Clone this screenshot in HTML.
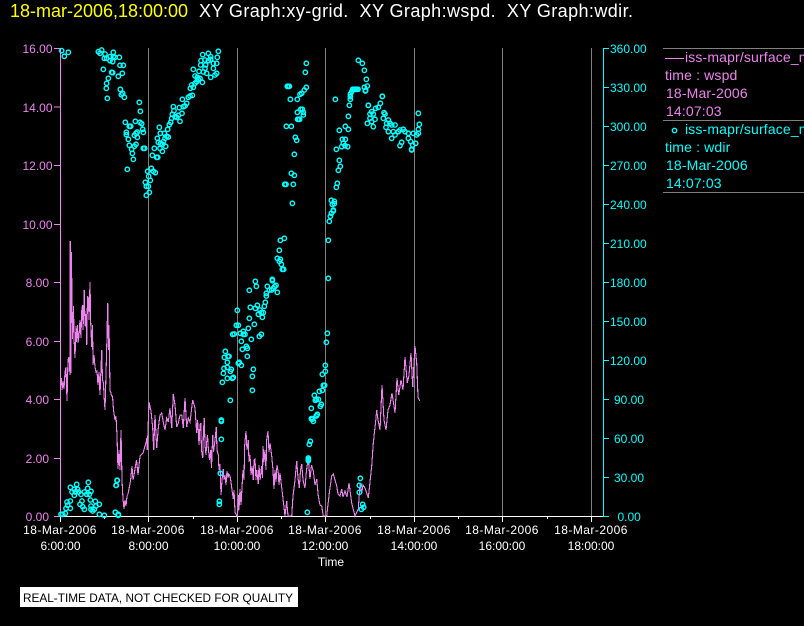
<!DOCTYPE html>
<html>
<head>
<meta charset="utf-8">
<style>
html,body{margin:0;padding:0;background:#000;width:804px;height:626px;overflow:hidden}
svg{display:block;position:absolute;left:0;top:0}
text{font-family:"Liberation Sans",sans-serif;white-space:pre}
.l text{font-size:12px;fill:#EE82EE}
.r text{font-size:12px;fill:#00FFFF}
.b text{font-size:12px;fill:#fff;text-anchor:middle}
.b .dt{letter-spacing:.45px}
.lg text{font-size:14px;letter-spacing:.15px}
.d polyline{fill:none;stroke:none;marker-start:url(#m);marker-mid:url(#m);marker-end:url(#m)}
</style>
</head>
<body>
<svg width="804" height="626" viewBox="0 0 804 626" xmlns="http://www.w3.org/2000/svg">
<defs>
<marker id="m" markerUnits="userSpaceOnUse" markerWidth="30" markerHeight="30" refX="15" refY="15" viewBox="0 0 30 30" overflow="visible">
<circle cx="15" cy="15" r="6.6" fill="none" stroke="#00FFFF" stroke-width="4.2"/>
</marker>
</defs>
<rect width="804" height="626" fill="#000"/>

<text x="10" y="17" font-size="18" fill="#FFFF00" textLength="178" lengthAdjust="spacingAndGlyphs">18-mar-2006,18:00:00</text>
<text x="199" y="17" font-size="18" fill="#fff" textLength="434" lengthAdjust="spacing">XY Graph:xy-grid.  XY Graph:wspd.  XY Graph:wdir.</text>

<g shape-rendering="crispEdges" stroke-width="1" fill="none">
<path stroke="#808080" d="M148.5 48V516M237.5 48V516M325.5 48V516M414.5 48V516M502.5 48V516M591.5 48V516"/>
<path stroke="#808080" d="M663 48.5H804M663 120.5H804M663 192.5H804"/>
<path stroke="#EE82EE" d="M60.5 48V516.5M54 48.5H60M54 107H60M54 165.5H60M54 224.5H60M54 282.5H60M54 341.5H60M54 399.5H60M54 458.5H60M54 516.5H60M665 58.5H684"/>
<path stroke="#00FFFF" d="M603.5 48.5V516.5M603 48.5H609M603 87.5H609M603 126.5H609M603 165.5H609M603 204.5H609M603 243.5H609M603 282.5H609M603 321.5H609M603 360.5H609M603 399.5H609M603 438.5H609M603 477.5H609M603 516.5H609"/>
<path stroke="#fff" d="M60 516.5H603M60.5 516V522M148.5 516V522M237.5 516V522M325.5 516V522M414.5 516V522M502.5 516V522M591.5 516V522M104.5 516V519M193.5 516V519M281.5 516V519M370.5 516V519M458.5 516V519M547.5 516V519"/>
</g>

<g class="l" text-anchor="end">
<text x="52.5" y="53">16.00</text><text x="52.5" y="112">14.00</text><text x="52.5" y="170">12.00</text><text x="52.5" y="229">10.00</text>
<text x="49" y="287">8.00</text><text x="49" y="346">6.00</text><text x="49" y="404">4.00</text><text x="49" y="463">2.00</text><text x="49" y="521">0.00</text>
</g>
<g class="r">
<text x="610" y="53">360.00</text><text x="610" y="92">330.00</text><text x="610" y="131">300.00</text><text x="610" y="170">270.00</text><text x="610" y="209">240.00</text><text x="610" y="248">210.00</text><text x="610" y="287">180.00</text><text x="610" y="326">150.00</text><text x="610" y="365">120.00</text>
<text x="614" y="404">90.00</text><text x="614" y="443">60.00</text><text x="614" y="482">30.00</text><text x="617.5" y="521">0.00</text>
</g>
<g class="b">
<text class="dt" x="60" y="534">18-Mar-2006</text><text class="dt" x="148" y="534">18-Mar-2006</text><text class="dt" x="237" y="534">18-Mar-2006</text><text class="dt" x="325" y="534">18-Mar-2006</text><text class="dt" x="414" y="534">18-Mar-2006</text><text class="dt" x="502" y="534">18-Mar-2006</text><text class="dt" x="591" y="534">18-Mar-2006</text>
<text x="60.5" y="550">6:00:00</text><text x="148.5" y="550">8:00:00</text><text x="237" y="550">10:00:00</text><text x="325" y="550">12:00:00</text><text x="414" y="550">14:00:00</text><text x="502" y="550">16:00:00</text><text x="591" y="550">18:00:00</text>
<text x="331" y="566">Time</text>
</g>

<g class="lg">
<g fill="#EE82EE">
<text x="685" y="62">iss-mapr/surface_met</text>
<text x="665" y="80">time : wspd</text>
<text x="666" y="98">18-Mar-2006</text>
<text x="666" y="116">14:07:03</text>
</g>
<g fill="#00FFFF">
<text x="685" y="134">iss-mapr/surface_met</text>
<text x="665" y="152">time : wdir</text>
<text x="666" y="170">18-Mar-2006</text>
<text x="666" y="188">14:07:03</text>
</g>
</g>
<circle cx="674.5" cy="130.5" r="2.2" fill="none" stroke="#00FFFF" stroke-width="1.4"/>

<polyline fill="none" stroke="#EE82EE" stroke-width="1.1" shape-rendering="crispEdges" points="61,384 61.5,378 62,390 63,381 64,389 65,372 66,367 67,401 68,360 69,357 70,375 70.3,241 71,373 71.3,252 72,297 72.5,339 73.5,306 74,338 75,358 76,326 76.5,342 77.5,325 78,343 79,336 80,320 81,338 81.5,312 82.5,305 83,330 84.3,290 85,326 86,314 86.7,345 87.5,296 88.5,298 89,320 90,282 90.7,323 91.7,347 92.5,325 93,365 94,355 95,367 96,372 97,371 98,385 99,372 100,395 101.7,350 102.5,380 103.5,383 104,395 105,410 106.7,348 107.7,303 108.5,350 109,325 110,391 110.7,392 111.5,396 112.5,396 113.5,410 115,420 116,416 117,436 118,469 119,450 120,470 121,430 122,480 123,499 124,509 125,500 126,506 127,496 128,494 130.5,481 132,466 133,480 134,475 136.5,460 138,475 140,456 143,453 145,446 146.7,440 146.7,438 147.3,450 149,402 151,411 152.7,428 153.7,450 155,415 156.7,448 158.3,428 160,415 161.7,413 163.3,422 165,430 166.7,418 168.3,422 170,408 171.7,428 173.3,394 175,405 176.7,427 178.3,423 180,415 181.7,415 183.3,428 185,398 186.7,427 188.3,418 190,422 192.7,400 195,408 196.7,433 197.5,420 198.3,430 199,445 200,425 200.7,423 201.5,450 202.7,458 203.5,430 204.3,418 205,445 206,455 206.7,442 207.5,435 208.3,448 209.5,460 210.7,450 211.5,468 212.7,435 213.5,452 215,440 216.3,427 217,450 218.3,455 219,470 220,464 221,495 222,480 223.3,469 224,480 225,475 226,485 227,471 228,478 228.7,474 230,476 231,482 232,490 233.3,499 234,490 235,512 236.7,516 237.5,516 238.5,495 239,510 240,489 241,505 241.7,493 243,470 244,480 244.7,445 246,431 247,450 248.3,440 249,462 250,455 251,475 252,466 253.3,480 254,460 255,459 256,480 256.7,470 258.3,484 259,465 260,480 261.7,466 262.5,478 263,446 264,462 265,450 266,470 266.7,440 268,431 269,452 270,443 271.7,456 273,470 274,489 275,470 276,482 277,465 278.3,473 279,485 280,473 282.7,496 285,516 286.7,501 288,516 291.7,516 293,496 295,480 296.7,461 298,478 299.3,488 300.5,470 301.7,464 303,480 305,488 306.5,470 308.3,459 310,479 311.5,465 313.3,471 315,485 316.7,479 318.3,496 320,505 321.7,506 323.3,516 326.7,516 329.3,493 331.7,476 333.3,474 336.7,486 338,494 340,496 341.7,489 343,497 345,491 347,497 349,483 351.7,503 355,516 358.3,509 360,484 361.7,493 363,485 365,488 368.3,498 371.7,466 373.3,443 376,418 376.7,410 378,420 380,430 382,385 384,420 386,430 388,410 390,405 392,393 395,413 397,378 398.7,395 401,380 403,390 405,357 407.3,383 409,375 411,353 412.7,387 415,346 416.7,363 418,397 419.7,401"/>

<g class="d">
<g transform="scale(.33333)">
<polyline points="185,152 193,169 205,157 295,155 300,160 305,150 315,162 320,175 313,175 330,170 330,182 340,157 340,170 338,185 345,172 358,172 310,208 335,217 338,218 325,235 320,250 319,265 322,295 355,229 367,220 360,196 370,196 361,268 368,280 364,284 373,292 418,307 421,334 376,367 406,364 420,367 425,371 388,379 392,379 379,397 379,404 412,396 408,400 428,388 430,397 403,406 385,418 412,412 388,436 408,433 403,439 395,448 397,460 430,445 434,445 400,478 382,508 454,505 443,514 460,514 466,518 446,529 451,541 436,547 439,559 445,559 448,577 439,586 457,466 463,445 470,472 473,472 472,415 475,427 478,382 481,400 482,430 480,445 487,454 487,433 493,400 495,415 490,425 497,439 500,409 505,411 503,388 508,374 512,367 515,355 517,343 520,320 522,332 525,350 530,352 535,346 540,364 538,323 546,340 550,320 555,318 560,310 547,298 565,292 570,288 577,286 571,265 575,255 580,262 585,250 590,245 595,238 585,228 592,232 600,235 607,247 580,208 597,214 610,216 620,220 602,195 608,164 625,160 603,182 615,180 625,182 632,178 640,190 650,190 640,205 645,225 650,220 632,232 615,205 617,195 652,172 655,154 632,170"/>
</g>
<g transform="translate(270,0) scale(.33333)">
<polyline points="109,190 106,217 52,259 55,259 58,259 109,262 103,270 95,280 90,283 61,298 82,298 82,337 92,328 97,328 100,337 100,345 83,358 86,358 89,358 49,379 64,379 76,412 80,421 73,463 64,520 73,526 44,553 48,553 70,553 67,610 265,181 277,190 283,211 289,238 292,258 283,262 287,271 248,268 252,268 256,268 260,268 264,268 245,275 241,282 241,290 241,298 238,316 196,298 235,349 226,379 235,388 208,391 217,418 226,418 220,430 215,440 225,437 233,440 199,448 208,481 211,499 205,511 202,550 199,562 184,601 193,604 193,611 187,613 190,630 337,289 295,316"/>
</g>
<g transform="translate(360,90) scale(.33333)">
<polyline points="67,19 25,46 61,40 47,55 55,52 35,65 30,72 40,72 72,68 75,72 30,85 45,88 22,100 35,95 40,110 70,85 85,90 90,100 80,100 78,112 95,105 105,105 85,125 100,125 105,135 115,125 120,120 130,118 135,125 145,130 160,130 175,130 170,135 175,118 178,103 175,70 95,145 125,157 120,167 145,145 152,155 167,160 158,165 155,178 155,180 16,3"/>
</g>
<g transform="translate(200,210) scale(.33333)">
<polyline points="253,85 241,91 238,121 232,145 241,148 238,154 244,163 247,178 251,178 166,214 169,229 148,241 217,208 217,212 202,229 228,226 224,230 220,235 215,240 208,240 199,250 199,258 232,247 196,277 193,289 172,286 151,292 166,295 180,300 184,308 190,308 175,313 187,322 148,325 112,301 163,343 109,346 115,346 145,355 130,364 121,370 135,373 130,373 103,372 98,373 184,373 178,379 154,388 124,394 139,409 142,415 127,418 76,424 142,439 87,439 84,439 73,442 82,457 118,457 115,460 124,466 160,478 72,475 82,472 94,478 91,484 70,490 157,499 82,505 97,505 100,502 67,517 157,541 91,571 64,630 385,91 385,205 382,370 379,397 376,466 376,484 367,493 370,526 374,526 367,541 358,544 343,556 349,568 355,568 346,571 364,583 361,589 334,595 352,613 349,617 334,626 338,626 388,34 391,19 394,10 400,3"/>
</g>
<g transform="translate(0,416) scale(.33333)">
<polyline points="664,16 664,70 661,172 658,256 658,265 352,193 349,208 346,289 355,298"/>
</g>
<g transform="translate(56,476) scale(.33333)">
<polyline points="97,19 43,34 62,25 55,40 65,40 48,48 58,48 68,48 75,55 55,58 95,37 105,46 92,55 100,55 85,48 103,72 118,76 130,85 43,75 33,78 35,88 30,97 43,97 28,112 20,115 15,115 78,75 72,85 80,92 85,100 105,90 120,90 105,100 115,100 110,105 130,115 145,118 178,109 187,115 183,13 180,28"/>
</g>
<g transform="translate(270,416) scale(.33333)">
<polyline points="126,10 130,16 139,0 121,76 118,85 115,126 115,130 115,134 112,289 271,187 268,208 268,229 278,265 281,274 274,280"/>
</g>
</g>

<rect x="20" y="587" width="278" height="20" fill="#fff"/>
<text x="23" y="602" font-size="12" fill="#000" textLength="270" lengthAdjust="spacingAndGlyphs">REAL-TIME DATA, NOT CHECKED FOR QUALITY</text>
</svg>
</body>
</html>
